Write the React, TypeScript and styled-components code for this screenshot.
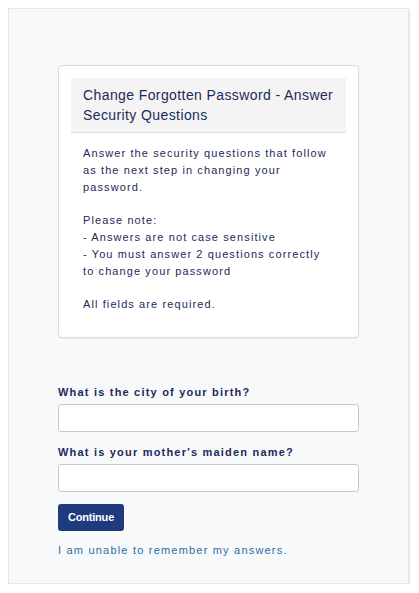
import * as React from "react";
import styled, { createGlobalStyle } from "styled-components";

const NAVY = "#1c2a5a";

const GlobalStyle = createGlobalStyle`
  body {
    margin: 8px;
    background: #ffffff;
    font-family: "Liberation Sans", Arial, sans-serif;
  }
`;

const SPanel = styled.div`
  margin-right: 2px;
  background: #f8f9fa;
  border: 1px solid #e6e7e9;
  box-shadow: 0 2px 2px rgba(0, 0, 0, 0.28);
  padding: 56px 49px 25px;
`;

const SCard = styled.div`
  background: #ffffff;
  border: 1px solid #dcdcdc;
  border-radius: 4px;
  box-shadow: 0 1px 2px rgba(0, 0, 0, 0.06);
  padding: 12px;
`;

const SCardHeader = styled.h2`
  margin: 0;
  background: #f4f4f4;
  border-bottom: 1px solid #dedede;
  padding: 7px 12px 7px;
  font-size: 14px;
  line-height: 20px;
  font-weight: normal;
  letter-spacing: 0.4px;
  color: ${NAVY};
`;

const SCardBody = styled.div`
  padding: 12px 18px 12px 12px;
  font-size: 11px;
  line-height: 16.8px;
  letter-spacing: 1.1px;
  color: ${NAVY};
`;

const SParagraph = styled.p`
  margin: 0;
  & + & {
    margin-top: 16.8px;
  }
`;

const SForm = styled.form`
  margin-top: 46px;
  display: flex;
  flex-direction: column;
  align-items: flex-start;
`;

const SField = styled.div`
  width: 100%;
  margin-bottom: 12px;
`;

const SLabel = styled.label`
  display: block;
  font-size: 11px;
  line-height: 16px;
  font-weight: bold;
  letter-spacing: 1.2px;
  color: ${NAVY};
  margin-bottom: 4px;
`;

const SInput = styled.input`
  display: block;
  box-sizing: border-box;
  width: 100%;
  height: 28px;
  border: 1px solid #c9c9c9;
  border-radius: 3px;
  background: #ffffff;
  padding: 4px 8px;
  font-family: inherit;
  font-size: 12px;
  outline: none;
`;

const SButton = styled.button`
  height: 27px;
  padding: 0 10px;
  border: none;
  border-radius: 3px;
  background: #1f3a7d;
  color: #ffffff;
  font-family: "Liberation Sans", Arial, sans-serif;
  font-size: 11px;
  font-weight: bold;
  letter-spacing: -0.2px;
  cursor: pointer;
`;

const SLink = styled.a`
  display: block;
  margin-top: 11px;
  font-size: 11px;
  line-height: 16px;
  letter-spacing: 1.2px;
  color: #2b6ea6;
  text-decoration: none;
  cursor: pointer;
`;

const questions = [
  { id: "birth-city", label: "What is the city of your birth?" },
  { id: "maiden-name", label: "What is your mother's maiden name?" }
];

const App = () => {
  return (
    <>
      <GlobalStyle />
      <SPanel>
        <SCard>
          <SCardHeader>
            {"Change Forgotten Password - Answer Security Questions"}
          </SCardHeader>
          <SCardBody>
            <SParagraph>
              {
                "Answer the security questions that follow as the next step in changing your password."
              }
            </SParagraph>
            <SParagraph>
              {"Please note:"}
              <br />
              {"- Answers are not case sensitive"}
              <br />
              {"- You must answer 2 questions correctly to change your password"}
            </SParagraph>
            <SParagraph>{"All fields are required."}</SParagraph>
          </SCardBody>
        </SCard>
        <SForm onSubmit={e => e.preventDefault()}>
          {questions.map(q => (
            <SField key={q.id}>
              <SLabel htmlFor={q.id}>{q.label}</SLabel>
              <SInput id={q.id} type="text" />
            </SField>
          ))}
          <SButton type="submit">{"Continue"}</SButton>
          <SLink>{"I am unable to remember my answers."}</SLink>
        </SForm>
      </SPanel>
    </>
  );
};

export default App;
